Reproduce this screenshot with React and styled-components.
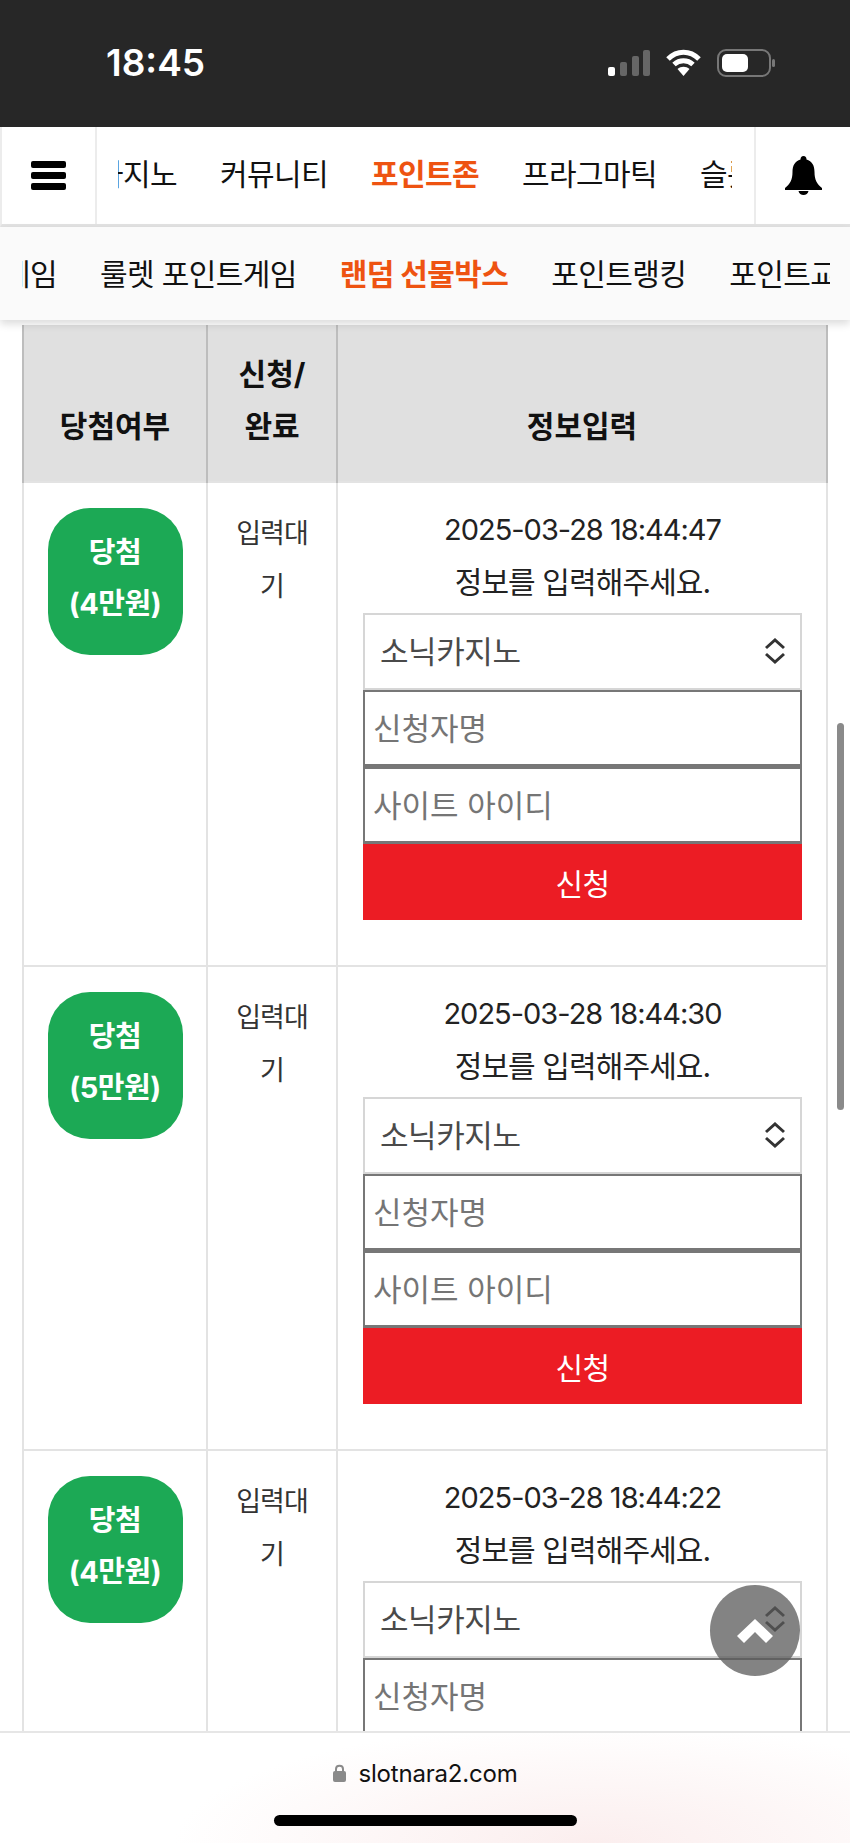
import React from 'react';
import styled, { createGlobalStyle } from 'styled-components';

const GlobalStyle = createGlobalStyle`
  html, body {
    margin: 0;
    padding: 0;
    background: #fff;
  }
  * {
    box-sizing: border-box;
  }
`;

const FONT = `Inter, "Noto Sans CJK KR", sans-serif`;

const mainMenu = ['카지노', '커뮤니티', '포인트존', '프라그마틱', '슬롯'];
const subMenu = ['포인트게임', '룰렛 포인트게임', '랜덤 선물박스', '포인트랭킹', '포인트교환'];

const rows = [
  { prize: '4만원', date: '2025-03-28 18:44:47' },
  { prize: '5만원', date: '2025-03-28 18:44:30' },
  { prize: '4만원', date: '2025-03-28 18:44:22' },
];

const Chevrons = () => (
  <ChevronSvg viewBox="0 0 22 26">
    <path d="M2 10 L11 2 L20 10 M2 16 L11 24 L20 16" fill="none" stroke="#333" strokeWidth="3" />
  </ChevronSvg>
);

const App = () => (
  <Screen>
    <GlobalStyle />
    <StatusBar>
      <Clock>18:45</Clock>
      <StatusIcons>
        <svg width="42" height="26" viewBox="0 0 42 26">
          <rect x="0" y="17" width="7" height="9" rx="2" fill="#fff" />
          <rect x="12" y="12" width="7" height="14" rx="2" fill="#666" />
          <rect x="24" y="6" width="7" height="20" rx="2" fill="#666" />
          <rect x="35" y="0" width="7" height="26" rx="2" fill="#666" />
        </svg>
        <svg width="37" height="27" viewBox="0 0 37 27">
          <path d="M3 10 C12 1 25 1 34 10 M9 15.5 C14.500 10.500 22.500 10.500 28 15.500" fill="none" stroke="#fff" strokeWidth="5" />
          <path d="M18.500 27 L12.500 20 C16 17 21 17 24.500 20 Z" fill="#fff" />
        </svg>
        <svg width="58" height="28" viewBox="0 0 58 28">
          <rect x="1" y="1" width="52" height="26" rx="8" fill="none" stroke="#777" strokeWidth="2" />
          <rect x="5" y="5" width="26" height="18" rx="5" fill="#fff" />
          <rect x="55" y="10" width="3" height="8" rx="1.500" fill="#777" />
        </svg>
      </StatusIcons>
    </StatusBar>

    <MainNav>
      <IconCell>
        <MenuBars>
          <i />
          <i />
          <i />
        </MenuBars>
      </IconCell>
      <MainMenuClip>
        <MenuTrack $offset={-22} $gap={43}>
          {mainMenu.map((item) => (
            <MenuItem key={item} $active={item === '포인트존'}>{item}</MenuItem>
          ))}
        </MenuTrack>
      </MainMenuClip>
      <IconCell $right>
        <svg width="37" height="39" viewBox="0 0 37 39">
          <path d="M18.500 0 C20.500 0 21.500 1.500 21.500 3.500 C27 5 29.500 9.500 29.500 16 C29.500 24 32 28 37 32 L37 34 L0 34 L0 32 C5 28 7.500 24 7.500 16 C7.500 9.500 10 5 15.500 3.500 C15.500 1.500 16.500 0 18.500 0 Z" fill="#000" />
          <path d="M13.500 35 C14 37.500 16 39 18.500 39 C21 39 23 37.500 23.500 35 Z" fill="#000" />
        </svg>
      </IconCell>
    </MainNav>

    <SubNav>
      <SubMenuClip>
        <MenuTrack $offset={-100} $gap={43}>
          {subMenu.map((item) => (
            <MenuItem key={item} $active={item === '랜덤 선물박스'}>{item}</MenuItem>
          ))}
        </MenuTrack>
      </SubMenuClip>
    </SubNav>

    <Content>
      <Table>
        <colgroup>
          <col style={{ width: 184 }} />
          <col style={{ width: 130 }} />
          <col />
        </colgroup>
        <thead>
          <tr>
            <Th>당첨여부</Th>
            <Th>신청/<br />완료</Th>
            <Th>정보입력</Th>
          </tr>
        </thead>
        <tbody>
          {rows.map((row) => (
            <tr key={row.date}>
              <Td>
                <Badge>당첨<br />({row.prize})</Badge>
              </Td>
              <StatusTd>입력대<br />기</StatusTd>
              <InfoTd>
                <DateText>{row.date}</DateText>
                <MessageText>정보를 입력해주세요.</MessageText>
                <SelectWrap>
                  <Select defaultValue="소닉카지노">
                    <option>소닉카지노</option>
                  </Select>
                  <Chevrons />
                </SelectWrap>
                <Input placeholder="신청자명" />
                <Input placeholder="사이트 아이디" />
                <SubmitButton>신청</SubmitButton>
              </InfoTd>
            </tr>
          ))}
        </tbody>
      </Table>
      <ScrollThumb />
      <TopButton>
        <svg width="36" height="24" viewBox="0 0 36 24">
          <path d="M18 0 L36 17 L29 24 L18 13 L7 24 L0 17 Z" fill="#fff" />
        </svg>
      </TopButton>
    </Content>

    <BottomBar>
      <UrlRow>
        <svg width="13" height="18" viewBox="0 0 13 18">
          <path d="M3 8 V5 C3 0.500 10 0.500 10 5 V8" fill="none" stroke="#8a8a8a" strokeWidth="2" />
          <rect x="0" y="7" width="13" height="11" rx="2" fill="#8a8a8a" />
        </svg>
        <UrlText>slotnara2.com</UrlText>
      </UrlRow>
      <HomeIndicator />
    </BottomBar>
  </Screen>
);

export default App;

const Screen = styled.div`
  width: 850px;
  height: 1843px;
  display: flex;
  flex-direction: column;
  overflow: hidden;
  font-family: ${FONT};
  background: #fff;
`;

const StatusBar = styled.div`
  height: 127px;
  flex: none;
  background: #272727;
  display: flex;
  justify-content: space-between;
  align-items: center;
  padding: 0 75px 2px 106px;
`;

const Clock = styled.div`
  color: #fff;
  font-size: 37px;
  font-weight: 600;
`;

const StatusIcons = styled.div`
  display: flex;
  align-items: center;
  gap: 15px;
`;

const MainNav = styled.nav`
  height: 100px;
  flex: none;
  display: flex;
  background: #fff;
  border-left: 2px solid #ececec;
  border-bottom: 3px solid #e2e2e2;
`;

const IconCell = styled.div`
  width: ${(p) => (p.$right ? '96px' : '95px')};
  flex: none;
  display: flex;
  justify-content: center;
  align-items: center;
  border-right: ${(p) => (p.$right ? 'none' : '2px solid #ececec')};
  border-left: ${(p) => (p.$right ? '2px solid #ececec' : 'none')};
`;

const MenuBars = styled.div`
  width: 35px;
  display: flex;
  flex-direction: column;
  gap: 4px;

  i {
    display: block;
    height: 7px;
    background: #000;
    border-radius: 2px;
  }
`;

const MainMenuClip = styled.div`
  flex: 1;
  margin: 0 22px 0 21px;
  padding-bottom: 8px;
  overflow: hidden;
  display: flex;
  align-items: center;
`;

const SubMenuClip = styled.div`
  width: 808px;
  padding-bottom: 4px;
  overflow: hidden;
  display: flex;
  align-items: center;
`;

const MenuTrack = styled.div`
  display: flex;
  flex: none;
  gap: ${(p) => p.$gap}px;
  margin-left: ${(p) => p.$offset}px;
`;

const MenuItem = styled.a`
  flex: none;
  font-size: 30px;
  letter-spacing: -0.6px;
  white-space: nowrap;
  color: ${(p) => (p.$active ? '#ee5311' : '#111')};
  font-weight: ${(p) => (p.$active ? 700 : 400)};
`;

const SubNav = styled.nav`
  height: 93px;
  flex: none;
  display: flex;
  padding-left: 22px;
  background: #fafafa;
  box-shadow: 0 4px 8px rgba(0, 0, 0, 0.14);
  position: relative;
  z-index: 2;
`;

const Content = styled.main`
  flex: 1;
  min-height: 0;
  position: relative;
  overflow: hidden;
  padding: 5px 22px 0;
`;

const Table = styled.table`
  width: 806px;
  table-layout: fixed;
  border-collapse: collapse;
`;

const Th = styled.th`
  height: 157px;
  background: #e0e0e0;
  border: 2px solid #bdbdbd;
  border-top: none;
  border-bottom: none;
  padding: 0 2px 29px;
  vertical-align: bottom;
  font-size: 30px;
  font-weight: 700;
  line-height: 52px;
  letter-spacing: 0;
  color: #111;
`;

const Td = styled.td`
  height: 484px;
  padding: 25px 0 0;
  vertical-align: top;
  border: 2px solid #e3e3e3;
  text-align: center;
`;

const StatusTd = styled(Td)`
  padding-top: 24px;
  font-size: 27px;
  line-height: 53px;
  letter-spacing: -1px;
  color: #333;
`;

const InfoTd = styled(Td)`
  padding: 21px 24px 0 25px;
`;

const Badge = styled.div`
  width: 135px;
  height: 147px;
  margin: 0 auto;
  padding-top: 19px;
  text-align: center;
  border-radius: 42px;
  background: #1ca955;
  color: #fff;
  font-size: 29px;
  font-weight: 700;
  line-height: 51px;
  letter-spacing: -0.5px;
`;

const DateText = styled.div`
  font-size: 29px;
  line-height: 52px;
  letter-spacing: -1px;
  color: #222;
`;

const MessageText = styled.div`
  font-size: 30px;
  line-height: 52px;
  letter-spacing: -0.9px;
  color: #222;
`;

const SelectWrap = styled.div`
  position: relative;
  margin-top: 5px;
`;

const Select = styled.select`
  display: block;
  width: 100%;
  height: 77px;
  appearance: none;
  border: 2px solid #d6d6d6;
  border-radius: 0;
  background: #fff;
  padding: 0 15px;
  font-family: ${FONT};
  font-size: 31px;
  letter-spacing: -0.4px;
  color: #4a4a4a;
`;

const ChevronSvg = styled.svg`
  position: absolute;
  right: 16px;
  top: 25px;
  width: 22px;
  height: 26px;
`;

const Input = styled.input`
  display: block;
  width: 100%;
  height: 77px;
  border: 2px solid #777;
  border-bottom-width: 3px;
  border-radius: 0;
  background: #fff;
  padding: 0 8px;
  font-family: ${FONT};
  font-size: 31px;

  &::placeholder {
    color: #757575;
    opacity: 1;
  }
`;

const SubmitButton = styled.button`
  display: block;
  width: 100%;
  height: 76px;
  border: none;
  background: #ec1c24;
  color: #fff;
  font-family: ${FONT};
  font-size: 30px;
  letter-spacing: -0.6px;
`;

const ScrollThumb = styled.div`
  position: absolute;
  right: 6px;
  top: 403px;
  width: 7px;
  height: 387px;
  border-radius: 4px;
  background: #8a8a8a;
`;

const TopButton = styled.div`
  position: absolute;
  left: 710px;
  top: 1265px;
  width: 90px;
  height: 91px;
  border-radius: 50%;
  background: rgba(90, 90, 90, 0.75);
  display: flex;
  justify-content: center;
  align-items: center;
`;

const BottomBar = styled.footer`
  height: 112px;
  flex: none;
  display: flex;
  flex-direction: column;
  align-items: center;
  border-top: 2px solid #e6e6e6;
  background: radial-gradient(ellipse 420px 120px at 70% 100%, #fbeeee, #ffffff);
`;

const UrlRow = styled.div`
  display: flex;
  align-items: center;
  gap: 13px;
  margin-top: 26px;
  height: 28px;
`;

const UrlText = styled.span`
  font-size: 24px;
  color: #111;
  letter-spacing: -0.2px;
`;

const HomeIndicator = styled.div`
  width: 303px;
  height: 11px;
  margin-top: 28px;
  border-radius: 6px;
  background: #000;
`;
